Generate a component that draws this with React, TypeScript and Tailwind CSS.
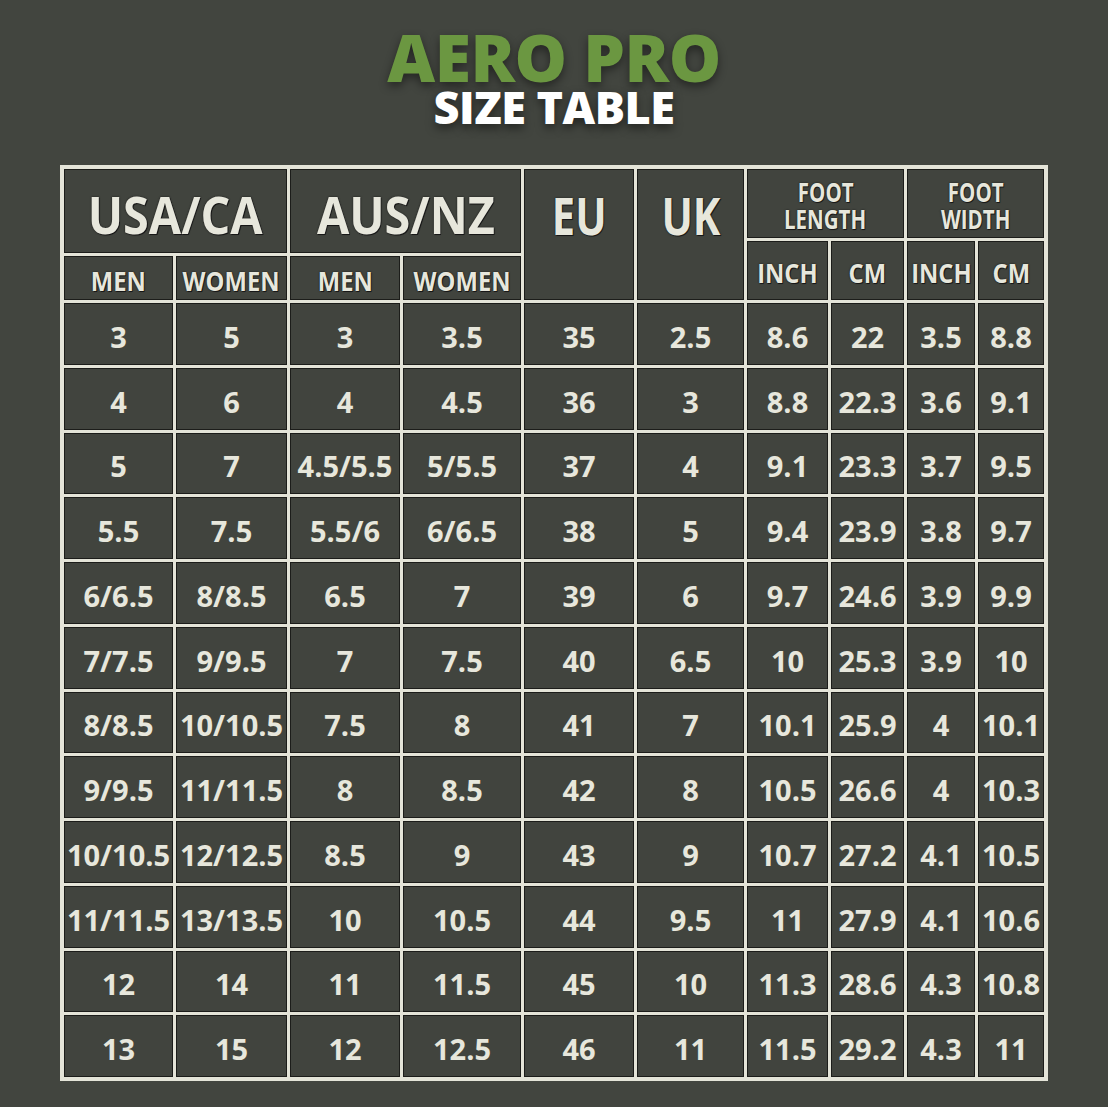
import React from "react";

const rows: string[][] = [
  ["3", "5", "3", "3.5", "35", "2.5", "8.6", "22", "3.5", "8.8"],
  ["4", "6", "4", "4.5", "36", "3", "8.8", "22.3", "3.6", "9.1"],
  ["5", "7", "4.5/5.5", "5/5.5", "37", "4", "9.1", "23.3", "3.7", "9.5"],
  ["5.5", "7.5", "5.5/6", "6/6.5", "38", "5", "9.4", "23.9", "3.8", "9.7"],
  ["6/6.5", "8/8.5", "6.5", "7", "39", "6", "9.7", "24.6", "3.9", "9.9"],
  ["7/7.5", "9/9.5", "7", "7.5", "40", "6.5", "10", "25.3", "3.9", "10"],
  ["8/8.5", "10/10.5", "7.5", "8", "41", "7", "10.1", "25.9", "4", "10.1"],
  ["9/9.5", "11/11.5", "8", "8.5", "42", "8", "10.5", "26.6", "4", "10.3"],
  ["10/10.5", "12/12.5", "8.5", "9", "43", "9", "10.7", "27.2", "4.1", "10.5"],
  ["11/11.5", "13/13.5", "10", "10.5", "44", "9.5", "11", "27.9", "4.1", "10.6"],
  ["12", "14", "11", "11.5", "45", "10", "11.3", "28.6", "4.3", "10.8"],
  ["13", "15", "12", "12.5", "46", "11", "11.5", "29.2", "4.3", "11"],
];

const cell =
  "flex items-center justify-center bg-[#41443e] border border-[#1c1d1a] overflow-visible";
const hText =
  "inline-block font-bold text-[#e7e7dc] whitespace-nowrap [text-shadow:0_0_2px_#111,1px_1px_0_#1a1a1a]";

export default function App() {
  return (
    <div
      className="w-[1108px] h-[1107px] bg-[#42453f] flex flex-col items-center overflow-hidden"
      style={{ fontFamily: '"Open Sans", "DejaVu Sans", sans-serif' }}
    >
      <div className="pt-[25px] text-[66px] leading-[62px] font-extrabold text-[#6b9741] tracking-[-0.5px] [text-shadow:0_4px_10px_rgba(0,0,0,0.45)]">
        AERO PRO
      </div>
      <div className="text-[45px] leading-[40px] font-extrabold text-white tracking-[-0.5px] [text-shadow:0_4px_10px_rgba(0,0,0,0.5)]">
        SIZE TABLE
      </div>

      <div className="mt-[38px] bg-[#e4e4d8] p-[4px] grid gap-[3px] grid-cols-[109px_111px_110px_118px_110px_107px_81px_73px_68px_66px] grid-rows-[69px_12px_44px_repeat(12,61.75px)]">
        {/* Header */}
        <div className={`${cell} col-start-1 col-span-2 row-start-1 row-span-2`}>
          <span className={`${hText} text-[52px] leading-none scale-x-[0.9] pt-[6px]`}>USA/CA</span>
        </div>
        <div className={`${cell} col-start-3 col-span-2 row-start-1 row-span-2`}>
          <span className={`${hText} text-[52px] leading-none scale-x-[0.9] pt-[6px]`}>AUS/NZ</span>
        </div>
        <div className={`${cell} col-start-5 row-start-1 row-span-3 !items-start`}>
          <div className="h-[84px] flex items-center justify-center">
            <span className={`${hText} text-[52px] leading-none scale-x-[0.8] pt-[6px]`}>EU</span>
          </div>
        </div>
        <div className={`${cell} col-start-6 row-start-1 row-span-3 !items-start`}>
          <div className="h-[84px] flex items-center justify-center">
            <span className={`${hText} text-[52px] leading-none scale-x-[0.8] pt-[6px]`}>UK</span>
          </div>
        </div>
        <div className={`${cell} col-start-7 col-span-2 row-start-1 flex-col pt-[3px]`}>
          <span className={`${hText} text-[27px] leading-[27px] scale-x-[0.76]`}>FOOT</span>
          <span className={`${hText} text-[27px] leading-[27px] scale-x-[0.76]`}>LENGTH</span>
        </div>
        <div className={`${cell} col-start-9 col-span-2 row-start-1 flex-col pt-[3px]`}>
          <span className={`${hText} text-[27px] leading-[27px] scale-x-[0.76]`}>FOOT</span>
          <span className={`${hText} text-[27px] leading-[27px] scale-x-[0.76]`}>WIDTH</span>
        </div>

        <div className={`${cell} col-start-1 row-start-3`}>
          <span className={`${hText} text-[27px] leading-none scale-x-[0.88] pt-[4px]`}>MEN</span>
        </div>
        <div className={`${cell} col-start-2 row-start-3`}>
          <span className={`${hText} text-[27px] leading-none scale-x-[0.88] pt-[4px]`}>WOMEN</span>
        </div>
        <div className={`${cell} col-start-3 row-start-3`}>
          <span className={`${hText} text-[27px] leading-none scale-x-[0.88] pt-[4px]`}>MEN</span>
        </div>
        <div className={`${cell} col-start-4 row-start-3`}>
          <span className={`${hText} text-[27px] leading-none scale-x-[0.88] pt-[4px]`}>WOMEN</span>
        </div>

        <div className={`${cell} col-start-7 row-start-2 row-span-2`}>
          <span className={`${hText} text-[27px] leading-none scale-x-[0.88] pt-[4px]`}>INCH</span>
        </div>
        <div className={`${cell} col-start-8 row-start-2 row-span-2`}>
          <span className={`${hText} text-[27px] leading-none scale-x-[0.88] pt-[4px]`}>CM</span>
        </div>
        <div className={`${cell} col-start-9 row-start-2 row-span-2`}>
          <span className={`${hText} text-[27px] leading-none scale-x-[0.88] pt-[4px]`}>INCH</span>
        </div>
        <div className={`${cell} col-start-10 row-start-2 row-span-2`}>
          <span className={`${hText} text-[27px] leading-none scale-x-[0.88] pt-[4px]`}>CM</span>
        </div>

        {/* Data */}
        {rows.map((r, ri) =>
          r.map((v, ci) => (
            <div key={`${ri}-${ci}`} className={cell}>
              <span className="font-bold text-[29px] leading-none text-[#e7e7dc] whitespace-nowrap pt-[5px]">
                {v}
              </span>
            </div>
          ))
        )}
      </div>
    </div>
  );
}
